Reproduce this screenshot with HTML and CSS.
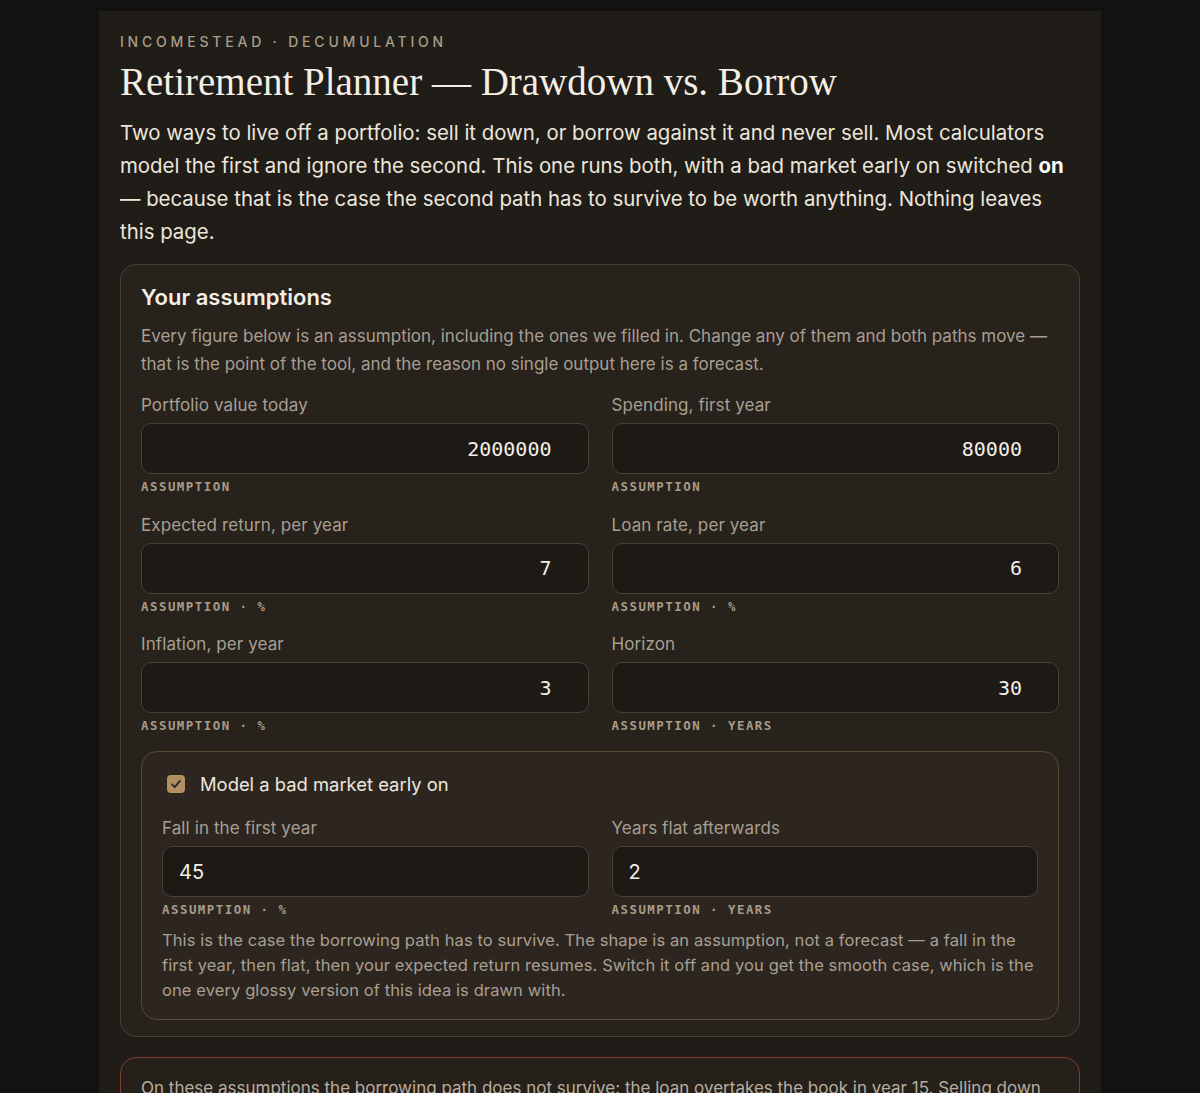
FILE: index.html
```html
<!DOCTYPE html>
<html lang="en">
<head>
<meta charset="utf-8">
<title>Retirement Planner — Drawdown vs. Borrow</title>
<link rel="stylesheet" href="styles.css">
</head>
<body>
<main class="page">
  <p class="eyebrow">Incomestead · Decumulation</p>
  <h1 class="title">Retirement Planner — Drawdown vs. Borrow</h1>
  <p class="intro">Two ways to live off a portfolio: sell it down, or borrow against it and never sell. Most calculators model the first and ignore the second. This one runs both, with a bad market early on switched <strong>on</strong> — because that is the case the second path has to survive to be worth anything. Nothing leaves this page.</p>

  <section class="card">
    <h2 class="card-title">Your assumptions</h2>
    <p class="card-desc">Every figure below is an assumption, including the ones we filled in. Change any of them and both paths move — that is the point of the tool, and the reason no single output here is a forecast.</p>

    <div class="grid">
      <div class="field">
        <label class="label">Portfolio value today</label>
        <input class="input num" type="text" value="2000000">
        <span class="tag">Assumption</span>
      </div>
      <div class="field">
        <label class="label">Spending, first year</label>
        <input class="input num" type="text" value="80000">
        <span class="tag">Assumption</span>
      </div>
      <div class="field">
        <label class="label">Expected return, per year</label>
        <input class="input num" type="text" value="7">
        <span class="tag">Assumption · %</span>
      </div>
      <div class="field">
        <label class="label">Loan rate, per year</label>
        <input class="input num" type="text" value="6">
        <span class="tag">Assumption · %</span>
      </div>
      <div class="field">
        <label class="label">Inflation, per year</label>
        <input class="input num" type="text" value="3">
        <span class="tag">Assumption · %</span>
      </div>
      <div class="field">
        <label class="label">Horizon</label>
        <input class="input num" type="text" value="30">
        <span class="tag">Assumption · years</span>
      </div>
    </div>

    <div class="stress">
      <label class="check-row">
        <span class="checkbox"><svg viewBox="0 0 16 16" width="14" height="14"><path d="M3.5 8.5l3 3 6-7" fill="none" stroke="#2a2a30" stroke-width="2.2" stroke-linecap="round" stroke-linejoin="round"/></svg></span>
        <span class="check-label">Model a bad market early on</span>
      </label>
      <div class="stress-grid">
        <div class="field">
          <label class="label">Fall in the first year</label>
          <input class="input plain" type="text" value="45">
          <span class="tag">Assumption · %</span>
        </div>
        <div class="field">
          <label class="label">Years flat afterwards</label>
          <input class="input plain" type="text" value="2">
          <span class="tag">Assumption · years</span>
        </div>
      </div>
      <p class="stress-note">This is the case the borrowing path has to survive. The shape is an assumption, not a forecast — a fall in the first year, then flat, then your expected return resumes. Switch it off and you get the smooth case, which is the one every glossy version of this idea is drawn with.</p>
    </div>
  </section>

  <section class="verdict">
    <p>On these assumptions the borrowing path does not survive: the loan overtakes the book in year 15. Selling down lasts the full horizon on the same market.</p>
  </section>
</main>
</body>
</html>
```

FILE: styles.css
```css
* { box-sizing: border-box; }

html, body {
  margin: 0;
  background: #121212;
}

body {
  font-family: Inter, "Noto Sans", "Liberation Sans", sans-serif;
  color: #ece6dc;
}

.page {
  width: 1002px;
  margin: 11px auto 0;
  padding: 20px 20px 40px;
  background: #201c17;
  border: 1px solid #201c17;
  min-height: 1200px;
}

.eyebrow {
  margin: 0;
  font-size: 14px;
  line-height: 20px;
  letter-spacing: 3.8px;
  text-transform: uppercase;
  color: #a89c88;
  font-weight: 500;
}

.title {
  margin: 6px 0 0;
  font-family: "Liberation Serif", "DejaVu Serif", serif;
  font-weight: 400;
  font-size: 39px;
  line-height: 48px;
  color: #f3eee6;
}

.intro {
  margin: 10px 0 0;
  font-size: 20.4px;
  line-height: 33px;
  color: #ece6dc;
}

.intro strong { font-weight: 700; color: #fff; }

.card {
  margin-top: 16px;
  background: #27221c;
  border: 1px solid #4a4033;
  border-radius: 16px;
  padding: 16px 20px 16px;
}

.card-title {
  margin: 0;
  font-size: 22px;
  line-height: 32px;
  font-weight: 600;
  color: #f3eee6;
}

.card-desc {
  margin: 9px 0 0;
  font-size: 17px;
  line-height: 28px;
  color: #a89f92;
}

.grid {
  margin-top: 16px;
  display: grid;
  grid-template-columns: 1fr 1fr;
  column-gap: 23px;
  row-gap: 18.5px;
}

.field {
  display: flex;
  flex-direction: column;
}

.label {
  font-size: 17px;
  line-height: 22px;
  letter-spacing: 0.1px;
  color: #a89f92;
}

.input {
  margin-top: 7px;
  height: 51px;
  width: 100%;
  background: #1d1915;
  border: 1px solid #4a4033;
  border-radius: 10px;
  color: #f3eee6;
  outline: none;
}

.input.num {
  font-family: "DejaVu Sans Mono", monospace;
  font-size: 20px;
  text-align: right;
  padding: 0 36px 0 16px;
}

.input.plain {
  font-family: Inter, "Noto Sans", sans-serif;
  font-size: 20px;
  text-align: left;
  padding: 0 16px;
}

.tag {
  margin-top: 5px;
  font-family: "DejaVu Sans Mono", monospace;
  font-weight: 700;
  font-size: 12.4px;
  line-height: 16px;
  letter-spacing: 1.5px;
  text-transform: uppercase;
  color: #a89c88;
}

.stress {
  margin-top: 17px;
  background: #2d2620;
  border: 1px solid #5a4b35;
  border-radius: 16px;
  padding: 20px 20px 16px;
}

.check-row {
  display: flex;
  align-items: center;
  gap: 15px;
  padding-left: 5px;
}

.checkbox {
  width: 18px;
  height: 18px;
  border-radius: 4px;
  background: #b38f62;
  display: flex;
  align-items: center;
  justify-content: center;
}

.check-label {
  font-size: 18.4px;
  line-height: 24px;
  color: #ece6dc;
}

.stress-grid {
  margin-top: 21px;
  display: grid;
  grid-template-columns: 1fr 1fr;
  column-gap: 23px;
}

.stress-note {
  margin: 10px 0 0;
  font-size: 16.5px;
  line-height: 25px;
  letter-spacing: 0.1px;
  color: #a89f92;
}

.verdict {
  margin-top: 20px;
  border: 1px solid #823c34;
  border-radius: 16px;
  background: #26201b;
  padding: 17px 20px;
}

.verdict p {
  margin: 0;
  font-size: 17px;
  line-height: 26px;
  color: #b8ae9f;
}
```
